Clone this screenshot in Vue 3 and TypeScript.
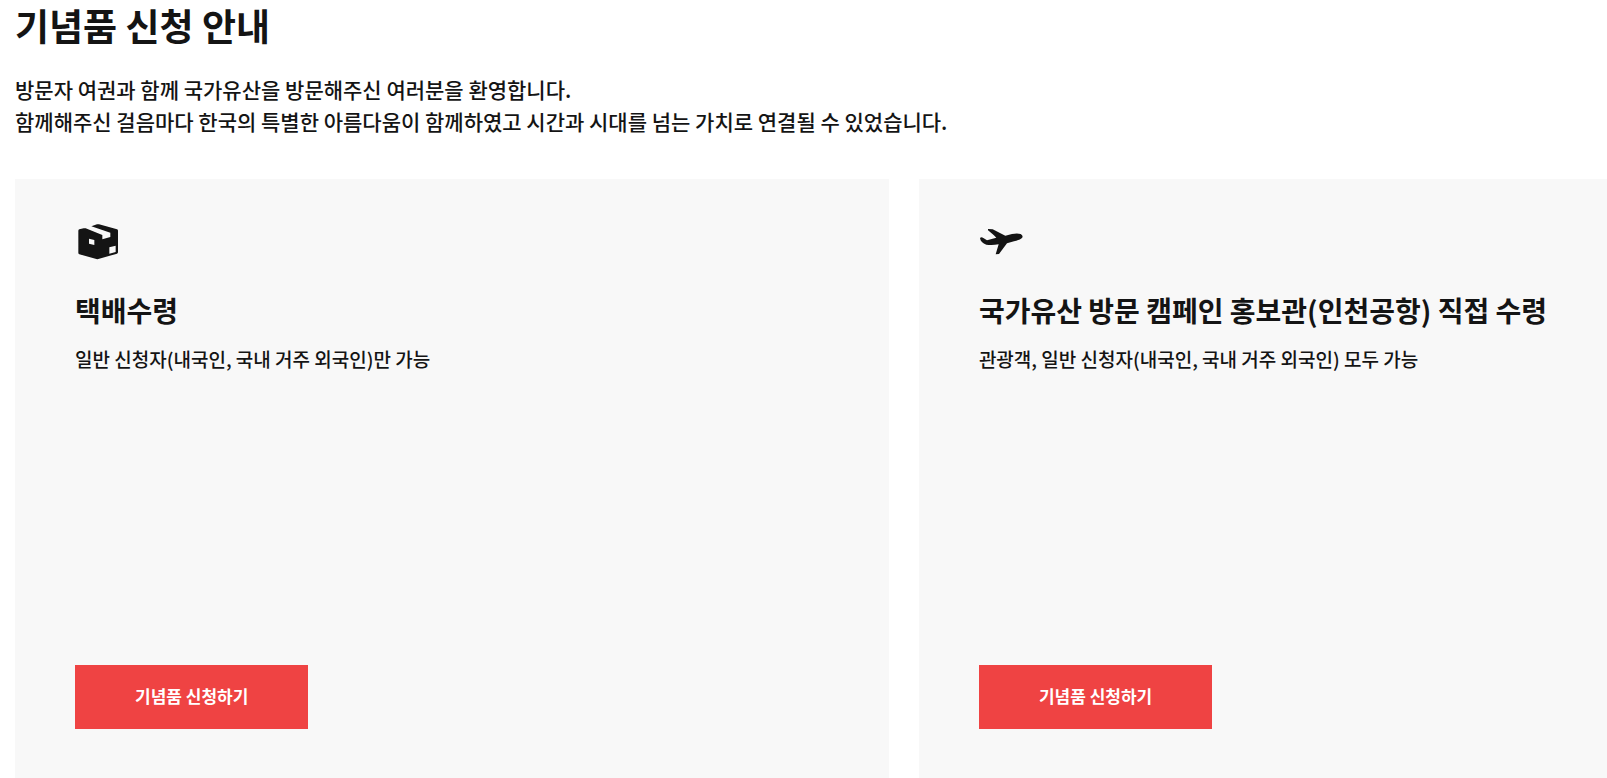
<script setup lang="ts">
interface Pickup {
  id: string
  title: string
  note: string
  viewBox: string
  icon: string
}

const intro: string[] = [
  '방문자 여권과 함께 국가유산을 방문해주신 여러분을 환영합니다.',
  '함께해주신 걸음마다 한국의 특별한 아름다움이 함께하였고 시간과 시대를 넘는 가치로 연결될 수 있었습니다.',
]

const pickups: Pickup[] = [
  {
    id: 'delivery',
    title: '택배수령',
    note: '일반 신청자(내국인, 국내 거주 외국인)만 가능',
    viewBox: '15 12 138 138',
    icon: 'M25 47Q25 44 28 43L41 40Q44 39 47 40L97 60V73L121 66V53L64 34L81 28Q84 27 87 28L141 43Q144 44 144 47V112Q144 115 141 116L85 132Q82 133 79 132L28 118Q25 117 25 114ZM57 71V86L73 90V75ZM118 97V116L137 111V92Z',
  },
  {
    id: 'airport',
    title: '국가유산 방문 캠페인 홍보관(인천공항) 직접 수령',
    note: '관광객, 일반 신청자(내국인, 국내 거주 외국인) 모두 가능',
    viewBox: '27 12 138 138',
    icon: 'M54 42L68 43L106 62L126 57Q142 54 152 57Q161 62 156 69Q151 75 132 79L111 85L87 117L77 118L86 88Q66 92 49 89C38 86 31 78 30 69Q34 65 40 69L51 76L79 68L71 60L54 46Z',
  },
]
</script>

<template>
  <main class="page">
    <h1 class="heading">기념품 신청 안내</h1>
    <div class="intro">
      <p v-for="line in intro" :key="line">{{ line }}</p>
    </div>
    <div class="cards">
      <section v-for="item in pickups" :key="item.id" class="card" :aria-labelledby="item.id">
        <svg class="icon" :viewBox="item.viewBox" aria-hidden="true">
          <path :d="item.icon" fill="currentColor" fill-rule="evenodd" />
        </svg>
        <h2 :id="item.id" class="title">{{ item.title }}</h2>
        <p class="note">{{ item.note }}</p>
        <button type="button" class="apply">기념품 신청하기</button>
      </section>
    </div>
  </main>
</template>

<style>
body {
  margin: 0;
  background: #fff;
}
</style>

<style scoped>
.page {
  box-sizing: border-box;
  display: flex;
  flex-direction: column;
  min-height: 100vh;
  padding-left: 15px;
  color: #141414;
  font-family: "Noto Sans CJK KR", "Noto Sans", sans-serif;
  font-weight: 500;
  word-break: keep-all;
}
.heading,
.title,
p {
  margin: 0;
}
.heading {
  font-size: 37px;
  font-weight: 700;
  line-height: 50px;
}
.intro {
  margin: 23px 0 42px;
  font-size: 21px;
  line-height: 32px;
}
.cards {
  flex: 1;
  display: grid;
  grid-template-columns: 1.27fr 1fr;
  gap: 30px;
}
.card {
  display: flex;
  flex-direction: column;
  align-items: flex-start;
  padding: 40px 0 49px 60px;
  background: #f8f8f8;
}
.icon {
  width: 46px;
  height: 46px;
}
.title {
  margin-top: 25px;
  font-size: 28px;
  font-weight: 700;
  line-height: 40px;
}
.note {
  margin: 15px 0 40px;
  font-size: 19px;
  line-height: 28px;
}
.apply {
  margin-top: auto;
  padding: 17px 60px 19px;
  border: 0;
  background: #ef4343;
  color: #fff;
  font-family: inherit;
  font-size: 17px;
  font-weight: 700;
  line-height: 28px;
  cursor: pointer;
}
</style>
